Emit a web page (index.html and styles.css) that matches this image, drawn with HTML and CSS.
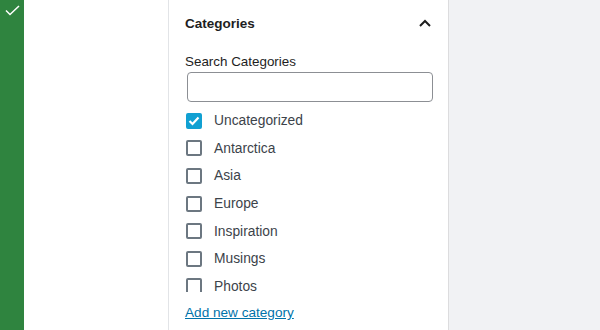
FILE: index.html
```html
<!DOCTYPE html>
<html lang="en">
  <head>
    <meta charset="UTF-8"/>
    <title>Categories</title>
    <link rel="stylesheet" href="styles.css">
  </head>
  <body>
    <div class="page">
      <div class="strip">
        <svg class="strip-check" width="15" height="11" viewBox="0 0 15 11">
          <path d="M1 5.5 L5 9.5 L14 1" fill="none" stroke="#fff" stroke-width="1.5"/>
        </svg>
      </div>
      <div class="canvas"></div>
      <div class="panel">
        <div class="panel-header">
          <span class="panel-title">Categories</span>
          <svg class="chevron" width="14" height="10" viewBox="0 0 14 10">
            <path d="M2 8 L7 3 L12 8" fill="none" stroke="#1e1e1e" stroke-width="2"/>
          </svg>
        </div>
        <label class="search-label">Search Categories</label>
        <input class="search-input" type="text"/>
        <div class="term-list">
          <label class="term"><span class="box checked"><svg width="12" height="10" viewBox="0 0 12 10"><path d="M1.5 5 L4.5 8 L10.5 1.5" fill="none" stroke="#fff" stroke-width="2.2"/></svg></span>Uncategorized</label>
          <label class="term"><span class="box"></span>Antarctica</label>
          <label class="term"><span class="box"></span>Asia</label>
          <label class="term"><span class="box"></span>Europe</label>
          <label class="term"><span class="box"></span>Inspiration</label>
          <label class="term"><span class="box"></span>Musings</label>
          <label class="term"><span class="box"></span>Photos</label>
        </div>
        <a class="add-link" href="#">Add new category</a>
      </div>
      <div class="rest"></div>
    </div>
  </body>
</html>
```

FILE: styles.css
```css
body {
  margin: 0;
  font-family: "Liberation Sans", Arial, sans-serif;
}

.page {
  display: flex;
  height: 330px;
  overflow: hidden;
}

.strip {
  width: 24px;
  background-color: #2f843f;
}

.strip-check {
  display: block;
  margin: 5px 0 0 5px;
}

.canvas {
  width: 144px;
  background-color: #fff;
}

.panel {
  width: 247px;
  border-left: 1px solid #e2e4e7;
  border-right: 1px solid #dcdcde;
  background-color: #fff;
  padding: 0 16px;
  display: flex;
  flex-direction: column;
}

.panel-header {
  display: flex;
  justify-content: space-between;
  align-items: center;
  height: 46px;
}

.panel-title {
  font-size: 13.5px;
  font-weight: bold;
  color: #1e1e1e;
}

.search-label {
  font-size: 13.4px;
  color: #1e1e1e;
  margin-top: 8px;
  line-height: 16px;
}

.search-input {
  margin: 2px 0 0 2px;
  width: 246px;
  height: 30px;
  box-sizing: border-box;
  border: 1px solid #8c8f94;
  border-radius: 4px;
}

.term-list {
  margin-top: 5px;
  height: 185px;
  overflow: hidden;
}

.term {
  display: flex;
  align-items: center;
  height: 27.6px;
  font-size: 13.8px;
  color: #3c434a;
}

.box {
  width: 16px;
  height: 16px;
  box-sizing: border-box;
  border: 2px solid #6c7781;
  border-radius: 2px;
  margin-left: 1px;
  margin-right: 12px;
  display: flex;
  align-items: center;
  justify-content: center;
}

.box.checked {
  background-color: #11a0d2;
  border-color: #11a0d2;
}

.add-link {
  margin-top: 13px;
  font-size: 13.6px;
  color: #0073aa;
  text-decoration: underline;
  align-self: flex-start;
}

.rest {
  flex: 1;
  background-color: #f1f2f4;
}
```
